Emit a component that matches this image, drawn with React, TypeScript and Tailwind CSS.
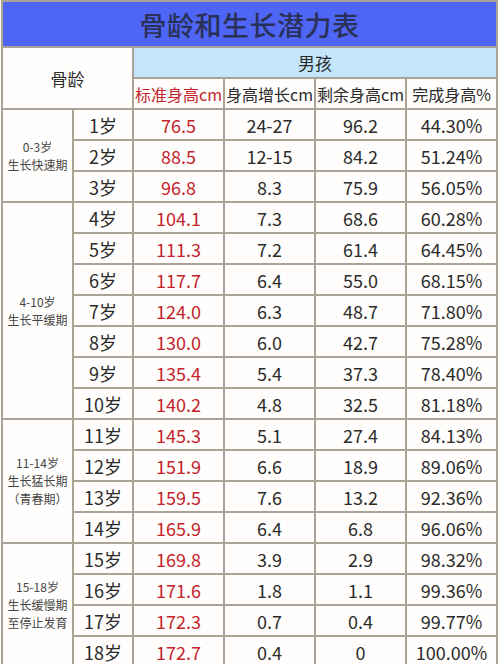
import React from "react";

type Row = { age: string; std: string; inc: string; rem: string; pct: string };

const groups: { label: string[]; rows: Row[] }[] = [
  {
    label: ["0-3岁", "生长快速期"],
    rows: [
      { age: "1岁", std: "76.5", inc: "24-27", rem: "96.2", pct: "44.30%" },
      { age: "2岁", std: "88.5", inc: "12-15", rem: "84.2", pct: "51.24%" },
      { age: "3岁", std: "96.8", inc: "8.3", rem: "75.9", pct: "56.05%" },
    ],
  },
  {
    label: ["4-10岁", "生长平缓期"],
    rows: [
      { age: "4岁", std: "104.1", inc: "7.3", rem: "68.6", pct: "60.28%" },
      { age: "5岁", std: "111.3", inc: "7.2", rem: "61.4", pct: "64.45%" },
      { age: "6岁", std: "117.7", inc: "6.4", rem: "55.0", pct: "68.15%" },
      { age: "7岁", std: "124.0", inc: "6.3", rem: "48.7", pct: "71.80%" },
      { age: "8岁", std: "130.0", inc: "6.0", rem: "42.7", pct: "75.28%" },
      { age: "9岁", std: "135.4", inc: "5.4", rem: "37.3", pct: "78.40%" },
      { age: "10岁", std: "140.2", inc: "4.8", rem: "32.5", pct: "81.18%" },
    ],
  },
  {
    label: ["11-14岁", "生长猛长期", "（青春期）"],
    rows: [
      { age: "11岁", std: "145.3", inc: "5.1", rem: "27.4", pct: "84.13%" },
      { age: "12岁", std: "151.9", inc: "6.6", rem: "18.9", pct: "89.06%" },
      { age: "13岁", std: "159.5", inc: "7.6", rem: "13.2", pct: "92.36%" },
      { age: "14岁", std: "165.9", inc: "6.4", rem: "6.8", pct: "96.06%" },
    ],
  },
  {
    label: ["15-18岁", "生长缓慢期", "至停止发育"],
    rows: [
      { age: "15岁", std: "169.8", inc: "3.9", rem: "2.9", pct: "98.32%" },
      { age: "16岁", std: "171.6", inc: "1.8", rem: "1.1", pct: "99.36%" },
      { age: "17岁", std: "172.3", inc: "0.7", rem: "0.4", pct: "99.77%" },
      { age: "18岁", std: "172.7", inc: "0.4", rem: "0", pct: "100.00%" },
    ],
  },
];

const cell = "bg-[#fffefc] flex items-center justify-center";

export default function App() {
  const items: React.ReactNode[] = [];
  let rowStart = 4;
  groups.forEach((g, gi) => {
    items.push(
      <div
        key={`g${gi}`}
        className={`${cell} flex-col text-[12px] leading-[18px] text-[#454545]`}
        style={{ gridColumn: "1", gridRow: `${rowStart} / span ${g.rows.length}` }}
      >
        {g.label.map((l) => (
          <span key={l}>{l}</span>
        ))}
      </div>
    );
    g.rows.forEach((r, ri) => {
      const row = rowStart + ri;
      items.push(
        <div key={`a${gi}-${ri}`} className={`${cell} text-[#2b2b2b]`} style={{ gridColumn: "2", gridRow: `${row}` }}>
          {r.age}
        </div>,
        <div key={`s${gi}-${ri}`} className={`${cell} text-[#c4232b]`} style={{ gridColumn: "3", gridRow: `${row}` }}>
          {r.std}
        </div>,
        <div key={`i${gi}-${ri}`} className={`${cell} text-[#2b2b2b]`} style={{ gridColumn: "4", gridRow: `${row}` }}>
          {r.inc}
        </div>,
        <div key={`r${gi}-${ri}`} className={`${cell} text-[#2b2b2b]`} style={{ gridColumn: "5", gridRow: `${row}` }}>
          {r.rem}
        </div>,
        <div key={`p${gi}-${ri}`} className={`${cell} text-[#2b2b2b]`} style={{ gridColumn: "6", gridRow: `${row}` }}>
          {r.pct}
        </div>
      );
    });
    rowStart += g.rows.length;
  });

  return (
    <div
      className="bg-white w-[500px] min-h-[664px] pl-[1px]"
      style={{ fontFamily: '"Noto Sans CJK SC", "Noto Sans", sans-serif' }}
    >
      <div className="w-[497px] bg-[#aaa396] p-[2px] grid grid-cols-[69px_58px_89px_89px_89px_89px] grid-rows-[44px_29px_29px_repeat(18,29px)] gap-[2px] text-[18px] leading-none">
        <div className="col-span-6 bg-[#4f65f6] flex items-center justify-center text-[27px] font-medium text-[#2a3158] tracking-[0.5px]">
          骨龄和生长潜力表
        </div>
        <div className={`${cell} col-span-2 row-span-2 text-[17px] text-[#2b2b2b]`}>骨龄</div>
        <div className="col-span-4 bg-[#c4e6fb] flex items-center justify-center text-[17px] text-[#2b2b2b]">男孩</div>
        <div className={`${cell} text-[16px] text-[#c4232b]`}>标准身高cm</div>
        <div className={`${cell} text-[16px] text-[#2b2b2b]`}>身高增长cm</div>
        <div className={`${cell} text-[16px] text-[#2b2b2b]`}>剩余身高cm</div>
        <div className={`${cell} text-[16px] text-[#2b2b2b]`}>完成身高%</div>
        {items}
      </div>
    </div>
  );
}
